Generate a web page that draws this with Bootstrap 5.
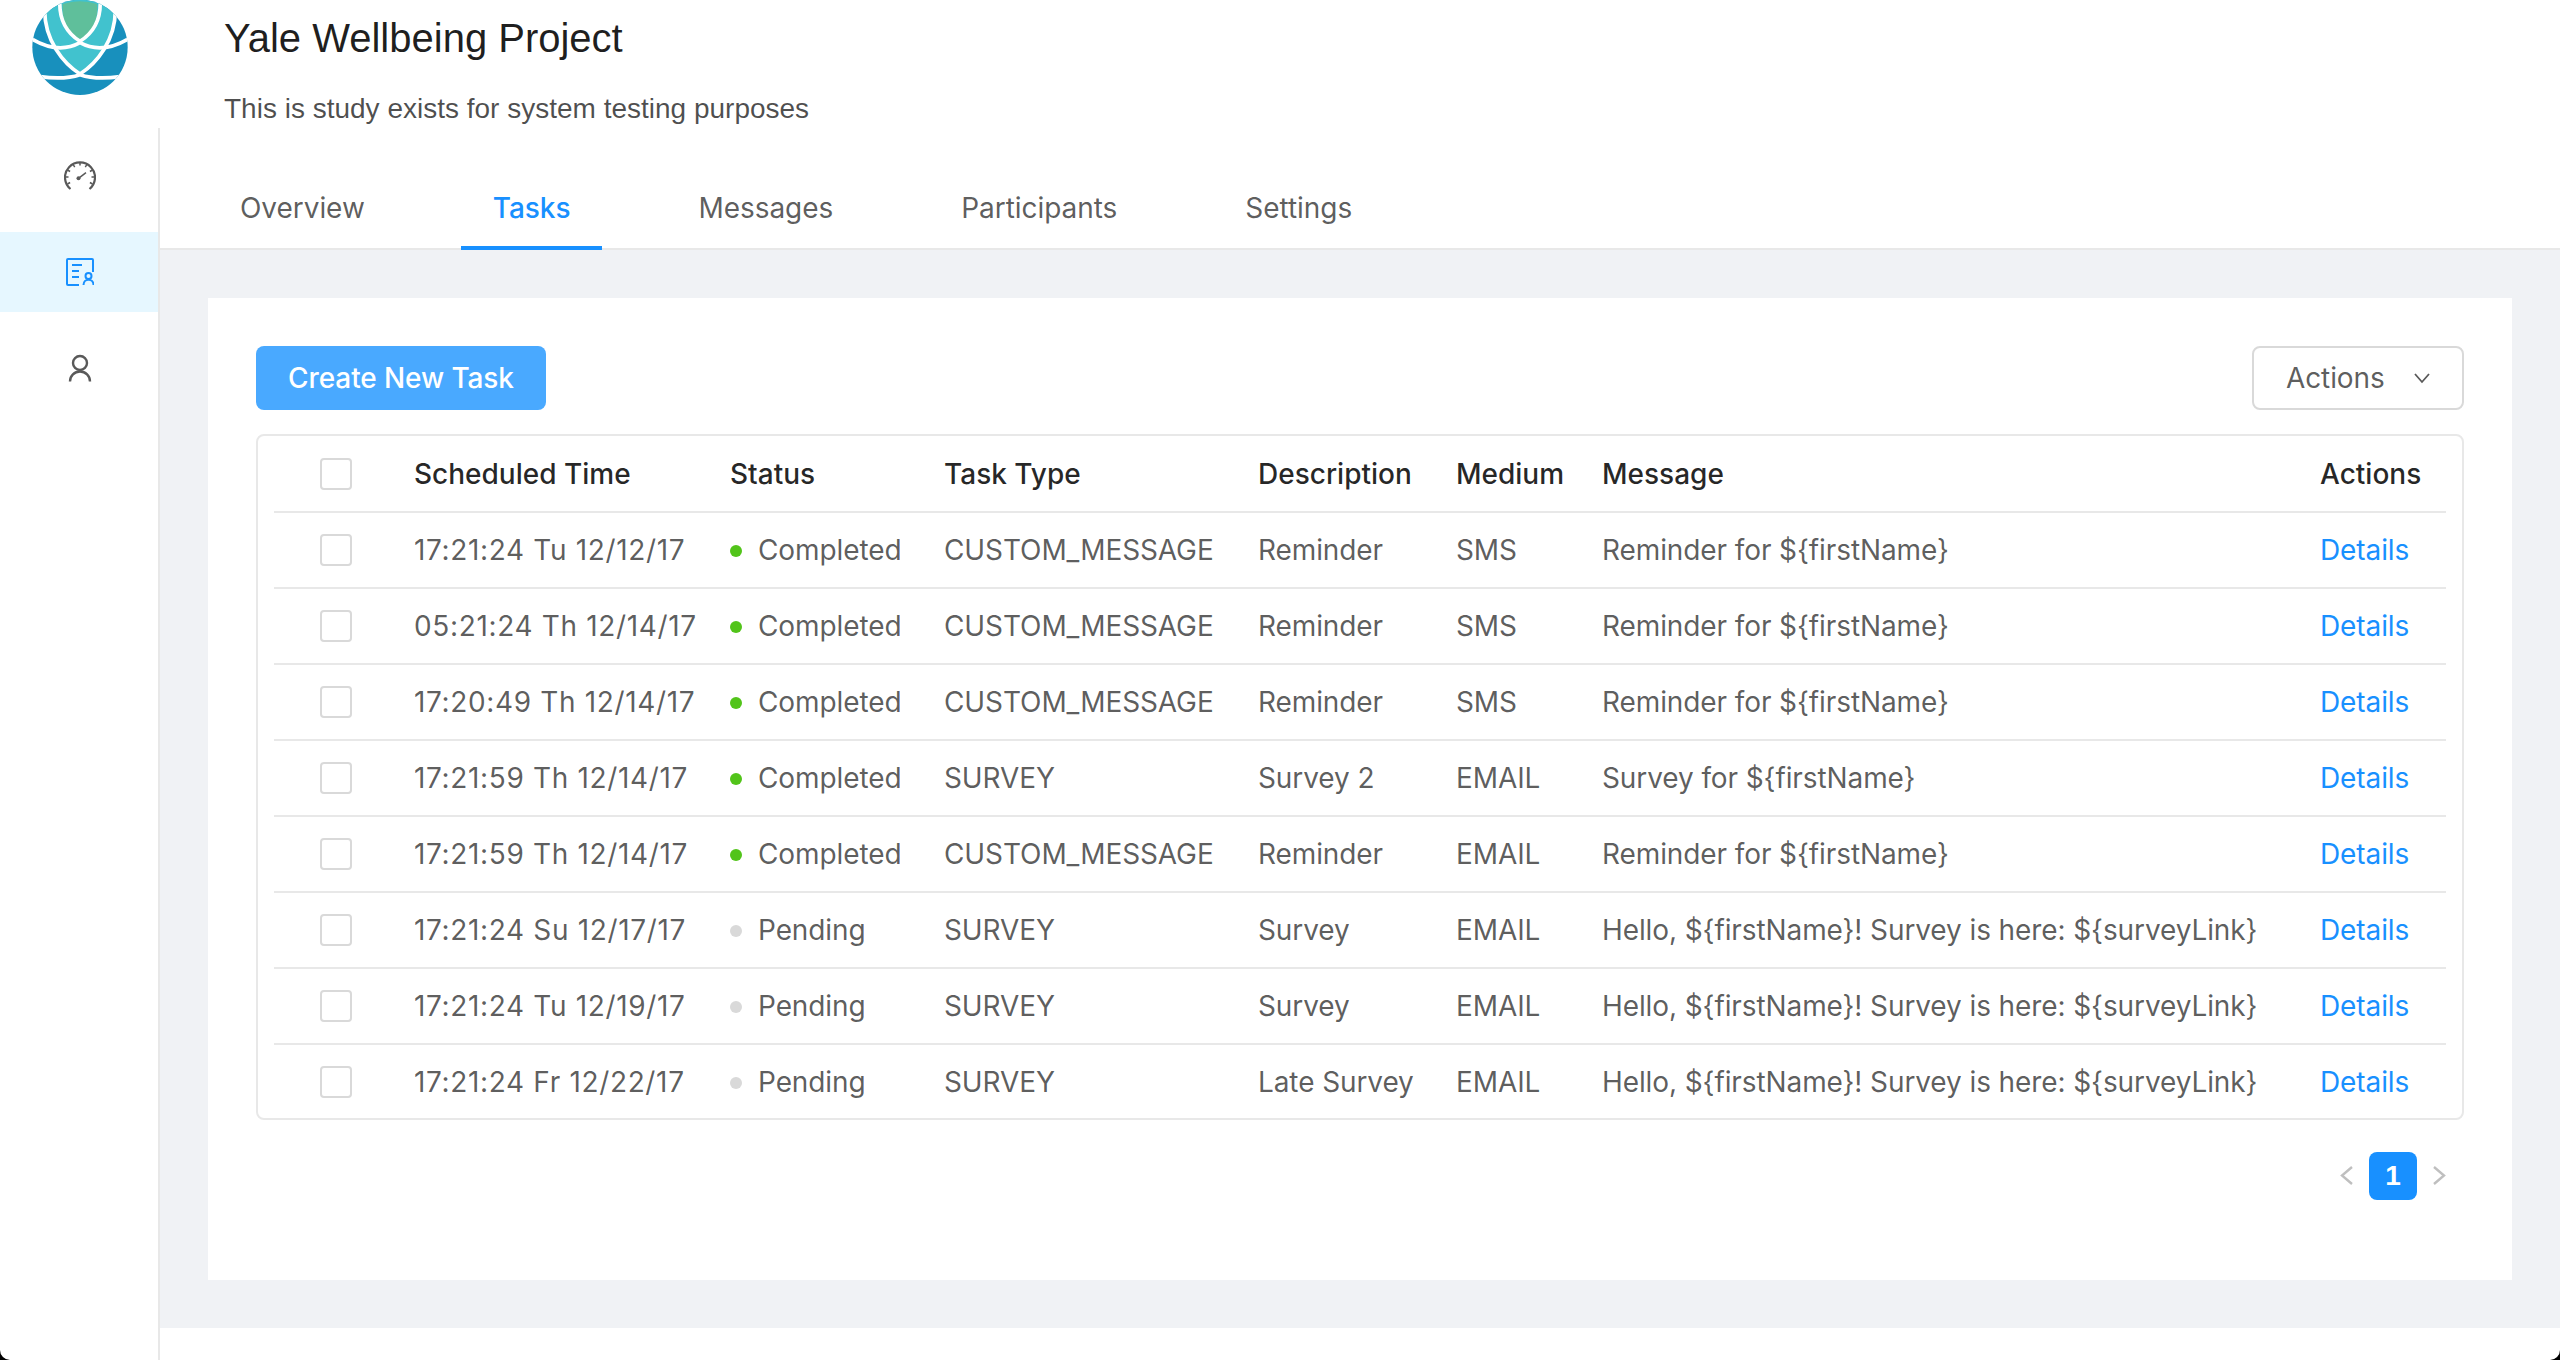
<!DOCTYPE html>
<html lang="en">
<head>
  <meta charset="UTF-8" />
  <title>Yale Wellbeing Project - Tasks</title>
  <link href="https://cdn.jsdelivr.net/npm/bootstrap@5.3.3/dist/css/bootstrap.min.css" rel="stylesheet">
  <style>
    html, body { height: 100%; }
    body {
      margin: 0;
      height: 1360px;
      overflow: hidden;
      background: #fff;
      color: rgba(0, 0, 0, .65);
      font-family: Inter, "Liberation Sans", sans-serif;
      font-size: 28px;
      line-height: 1.5;
      letter-spacing: -.1px;
    }
    .page-shell { height: 1360px; }
    .side-col { width: 160px; flex: none; }
    .logo-box { height: 128px; padding-left: 32px; }
    .logo-box svg { display: block; }
    .side-nav { border-right: 2px solid #e8e8e8; padding-top: 8px; gap: 16px; }
    .side-item { height: 80px; color: #595959; padding-left: 2px; }
    .side-item.is-on { background: #e6f7ff; color: #1890ff; }

    .main-col { min-width: 0; }
    .study-head { height: 166px; padding: 13px 0 0 64px; font-family: "Liberation Sans", Arial, sans-serif; letter-spacing: 0; }
    .study-title { font-size: 40px; line-height: 50px; font-weight: 400; color: rgba(0, 0, 0, .88); margin: 0 0 26px; }
    .study-sub { font-size: 28px; line-height: 40px; margin: 0; color: rgba(0, 0, 0, .7); }

    .nav-tabs.study-tabs { padding-left: 48px; gap: 64px; height: 84px; border-bottom: 2px solid #e8e8e8; --bs-nav-tabs-border-width: 0; }
    .study-tabs .nav-link {
      height: 84px; padding: 0 32px; display: flex; align-items: center; border: 0; border-radius: 0;
      color: rgba(0, 0, 0, .65); background: none; margin: 0; letter-spacing: -.05px;
    }
    .study-tabs .nav-link.active { color: #1890ff; font-weight: 500; border-bottom: 4px solid #1890ff; background: none; padding-top: 4px; }

    .grey-area { background: #f0f2f5; padding: 48px; height: 1078px; }
    .white-panel { background: #fff; padding: 48px 48px 80px; height: 982px; }
    .toolbar-row { height: 64px; margin-bottom: 24px; }
    .btn.btn-create {
      width: 290px; height: 64px; background: #49a9ff; border: 0; border-radius: 8px; color: #fff;
      font-size: 28px; font-weight: 500; letter-spacing: -.1px; padding: 0;
    }
    .btn.btn-actions {
      width: 212px; height: 64px; background: #fff; border: 2px solid #d9d9d9; border-radius: 8px;
      color: rgba(0, 0, 0, .65); font-size: 28px; letter-spacing: -.1px; padding: 0 32px; gap: 24px;
    }
    .table-wrap { border: 2px solid #e8e8e8; border-radius: 8px; padding: 0 16px; }
    .table.task-table { margin: 0; table-layout: fixed; width: 2172px; --bs-table-color: rgba(0, 0, 0, .65); --bs-table-bg: transparent; }
    .task-table th, .task-table td { padding: 0; height: 76px; vertical-align: middle; border-bottom: 2px solid #e8e8e8; white-space: nowrap; box-shadow: none; }
    .task-table tr:last-child td { border-bottom: 0; height: 74px; }
    .task-table th { font-weight: 500; color: rgba(0, 0, 0, .85); letter-spacing: 0; }
    .task-table th:nth-child(1) { width: 140px; padding-left: 46px; }
    .task-table td:nth-child(1) { padding-left: 46px; }
    .task-table th:nth-child(2) { width: 316px; }
    .task-table td:nth-child(2) { letter-spacing: .65px; }
    .task-table th:nth-child(3) { width: 214px; }
    .task-table th:nth-child(4) { width: 314px; }
    .task-table th:nth-child(5) { width: 198px; }
    .task-table th:nth-child(6) { width: 146px; }
    .task-table th:nth-child(7) { width: 718px; }
    .task-table th:nth-child(8) { width: 126px; }
    .form-check-input.row-check { width: 32px; height: 32px; margin: 0; border: 2px solid #d9d9d9; border-radius: 4px; display: block; }
    .state-dot { display: inline-block; width: 12px; height: 12px; border-radius: 50%; margin-right: 16px; vertical-align: 3px; background: #d9d9d9; }
    .state-dot.is-done { background: #52c41a; }
    .detail-link { color: #1890ff; text-decoration: none; }

    .pagination.task-pager { margin: 32px 0 0; gap: 16px; height: 48px; padding-right: 18px; }
    .task-pager .page-link { border: 0; padding: 0; width: 14px; height: 48px; display: flex; align-items: center; justify-content: center; background: none; color: #bfbfbf; }
    .task-pager .page-item.active .page-link {
      width: 48px; background: #1890ff; color: #fff; border-radius: 8px; font-family: "Liberation Sans", sans-serif; font-size: 28px; font-weight: 700;
    }
    .bottom-strip { height: 32px; background: #fff; }
    .win-corner { position: absolute; bottom: 0; width: 10px; height: 10px; display: block; }
    .win-corner.at-left { left: 0; }
    .win-corner.at-right { right: 0; transform: scaleX(-1); }
  </style>
</head>
<body>
<div class="page-shell d-flex position-relative">

  <!-- sidebar -->
  <div class="side-col d-flex flex-column">
    <div class="logo-box">
      <svg width="96" height="96" viewBox="96 0 288 288">
        <defs><clipPath id="globe"><circle cx="240" cy="142" r="143"/></clipPath></defs>
        <g clip-path="url(#globe)">
          <rect x="90" y="0" width="300" height="290" fill="#1890bd"/>
          <path d="M134 0 L134 50 C138 130 190 190 240 225 C290 190 342 130 346 50 L346 0 Z" fill="#41c2ce"/>
          <path d="M188 12 Q240 -4 291 12 C295 60 280 95 240 118 C200 95 185 60 188 12 Z" fill="#5fbf9b"/>
          <g fill="none" stroke="#fff" stroke-width="11">
            <path d="M134 30 C134 122 190 190 240 222 C290 190 346 122 346 30"/>
            <path d="M180 -5 C175 55 195 95 240 124 C285 95 305 55 300 -5"/>
            <path d="M92 115 C150 150 200 150 240 128 C280 150 330 150 388 115"/>
            <path d="M120 230 C165 236 205 236 240 224 C275 236 315 236 360 230"/>
          </g>
        </g>
      </svg>
    </div>
    <div class="side-nav d-flex flex-column flex-grow-1">
      <a class="side-item d-flex align-items-center justify-content-center" href="#">
        <svg width="32" height="32" viewBox="0 0 32 32" fill="none" stroke="currentColor" stroke-width="2.2">
          <path d="M6.500 29 A15 15 0 1 1 25.500 29"/>
          <path stroke-width="1.500" d="M16 2.500v3M9.200 4.500l1.500 2.600M22.800 4.500l-1.500 2.600M3.500 10l2.600 1.500M28.500 10l-2.600 1.500M1.500 17h3M30.500 17h-3M3.500 24l2.600-1.500M28.500 24l-2.600-1.500"/>
          <path d="M14.500 18.300 L22 12.700" stroke-width="1.500"/><circle cx="14.500" cy="18.300" r="2" fill="currentColor" stroke="none"/>
        </svg>
      </a>
      <a class="side-item is-on d-flex align-items-center justify-content-center" href="#">
        <svg width="28" height="28" viewBox="0 0 28 28" fill="none" stroke="currentColor" stroke-width="2">
          <path d="M27 14V2a1 1 0 0 0-1-1H2a1 1 0 0 0-1 1v24a1 1 0 0 0 1 1h11"/>
          <path d="M6 7h10M6 13h7M6 19h7"/>
          <circle cx="22.500" cy="18" r="3"/>
          <path d="M17.500 27c0-7 10-7 10 0"/>
        </svg>
      </a>
      <a class="side-item d-flex align-items-center justify-content-center" href="#">
        <svg width="32" height="32" viewBox="0 0 32 32" fill="none" stroke="currentColor" stroke-width="2.400">
          <circle cx="16" cy="11" r="7"/>
          <path d="M6 29.500a10 10 0 0 1 20 0"/>
        </svg>
      </a>
    </div>
  </div>

  <!-- main -->
  <div class="main-col flex-grow-1 d-flex flex-column">
    <div class="study-head">
      <h1 class="study-title">Yale Wellbeing Project</h1>
      <p class="study-sub">This is study exists for system testing purposes</p>
    </div>

    <ul class="nav nav-tabs study-tabs">
      <li class="nav-item"><a class="nav-link" href="#">Overview</a></li>
      <li class="nav-item"><a class="nav-link active" href="#">Tasks</a></li>
      <li class="nav-item"><a class="nav-link" href="#">Messages</a></li>
      <li class="nav-item"><a class="nav-link" href="#">Participants</a></li>
      <li class="nav-item"><a class="nav-link" href="#">Settings</a></li>
    </ul>

    <div class="grey-area">
      <div class="white-panel">
        <div class="toolbar-row d-flex justify-content-between">
          <button type="button" class="btn btn-create">Create New Task</button>
          <button type="button" class="btn btn-actions d-flex align-items-center justify-content-between">
            Actions
            <svg width="16" height="12" viewBox="0 0 16 12" fill="none" stroke="#595959" stroke-width="1.800"><path d="M1 2l7 8 7-8"/></svg>
          </button>
        </div>

        <div class="table-wrap">
          <table class="table task-table">
            <thead>
              <tr>
                <th><input class="form-check-input row-check" type="checkbox" aria-label="Select all"></th>
                <th>Scheduled Time</th>
                <th>Status</th>
                <th>Task Type</th>
                <th>Description</th>
                <th>Medium</th>
                <th>Message</th>
                <th>Actions</th>
              </tr>
            </thead>
            <tbody id="taskRows"></tbody>
          </table>
        </div>

        <ul class="pagination task-pager justify-content-end">
          <li class="page-item"><a class="page-link" href="#" aria-label="Previous">
            <svg width="14" height="20" viewBox="0 0 14 20" fill="none" stroke="currentColor" stroke-width="2.400"><path d="M12 1L2 9.500 12 18"/></svg>
          </a></li>
          <li class="page-item active"><a class="page-link" href="#">1</a></li>
          <li class="page-item"><a class="page-link" href="#" aria-label="Next">
            <svg width="14" height="20" viewBox="0 0 14 20" fill="none" stroke="currentColor" stroke-width="2.400"><path d="M2 1l10 8.500L2 18"/></svg>
          </a></li>
        </ul>
      </div>
    </div>
    <div class="bottom-strip"></div>
  </div>

  <svg class="win-corner at-left" viewBox="0 0 10 10"><path d="M0 0 A10 10 0 0 0 10 10 H0Z" fill="#000"/></svg>
  <svg class="win-corner at-right" viewBox="0 0 10 10"><path d="M0 0 A10 10 0 0 0 10 10 H0Z" fill="#000"/></svg>
</div>

<script>
  const reminder = "Reminder for ${firstName}";
  const survey = "Hello, ${firstName}! Survey is here: ${surveyLink}";
  const tasks = [
    ["17:21:24 Tu 12/12/17", "Completed", "CUSTOM_MESSAGE", "Reminder", "SMS", reminder],
    ["05:21:24 Th 12/14/17", "Completed", "CUSTOM_MESSAGE", "Reminder", "SMS", reminder],
    ["17:20:49 Th 12/14/17", "Completed", "CUSTOM_MESSAGE", "Reminder", "SMS", reminder],
    ["17:21:59 Th 12/14/17", "Completed", "SURVEY", "Survey 2", "EMAIL", "Survey for ${firstName}"],
    ["17:21:59 Th 12/14/17", "Completed", "CUSTOM_MESSAGE", "Reminder", "EMAIL", reminder],
    ["17:21:24 Su 12/17/17", "Pending", "SURVEY", "Survey", "EMAIL", survey],
    ["17:21:24 Tu 12/19/17", "Pending", "SURVEY", "Survey", "EMAIL", survey],
    ["17:21:24 Fr 12/22/17", "Pending", "SURVEY", "Late Survey", "EMAIL", survey]
  ];

  const rows = document.getElementById("taskRows");
  tasks.forEach(t => {
    const tr = document.createElement("tr");
    tr.innerHTML = `
      <td><input class="form-check-input row-check" type="checkbox" aria-label="Select row"></td>
      <td>${t[0]}</td>
      <td><span class="state-dot ${t[1] === "Completed" ? "is-done" : ""}"></span>${t[1]}</td>
      <td>${t[2]}</td>
      <td>${t[3]}</td>
      <td>${t[4]}</td>
      <td>${t[5]}</td>
      <td><a class="detail-link" href="#">Details</a></td>`;
    rows.appendChild(tr);
  });
</script>
<script src="https://cdn.jsdelivr.net/npm/bootstrap@5.3.3/dist/js/bootstrap.bundle.min.js"></script>
</body>
</html>
